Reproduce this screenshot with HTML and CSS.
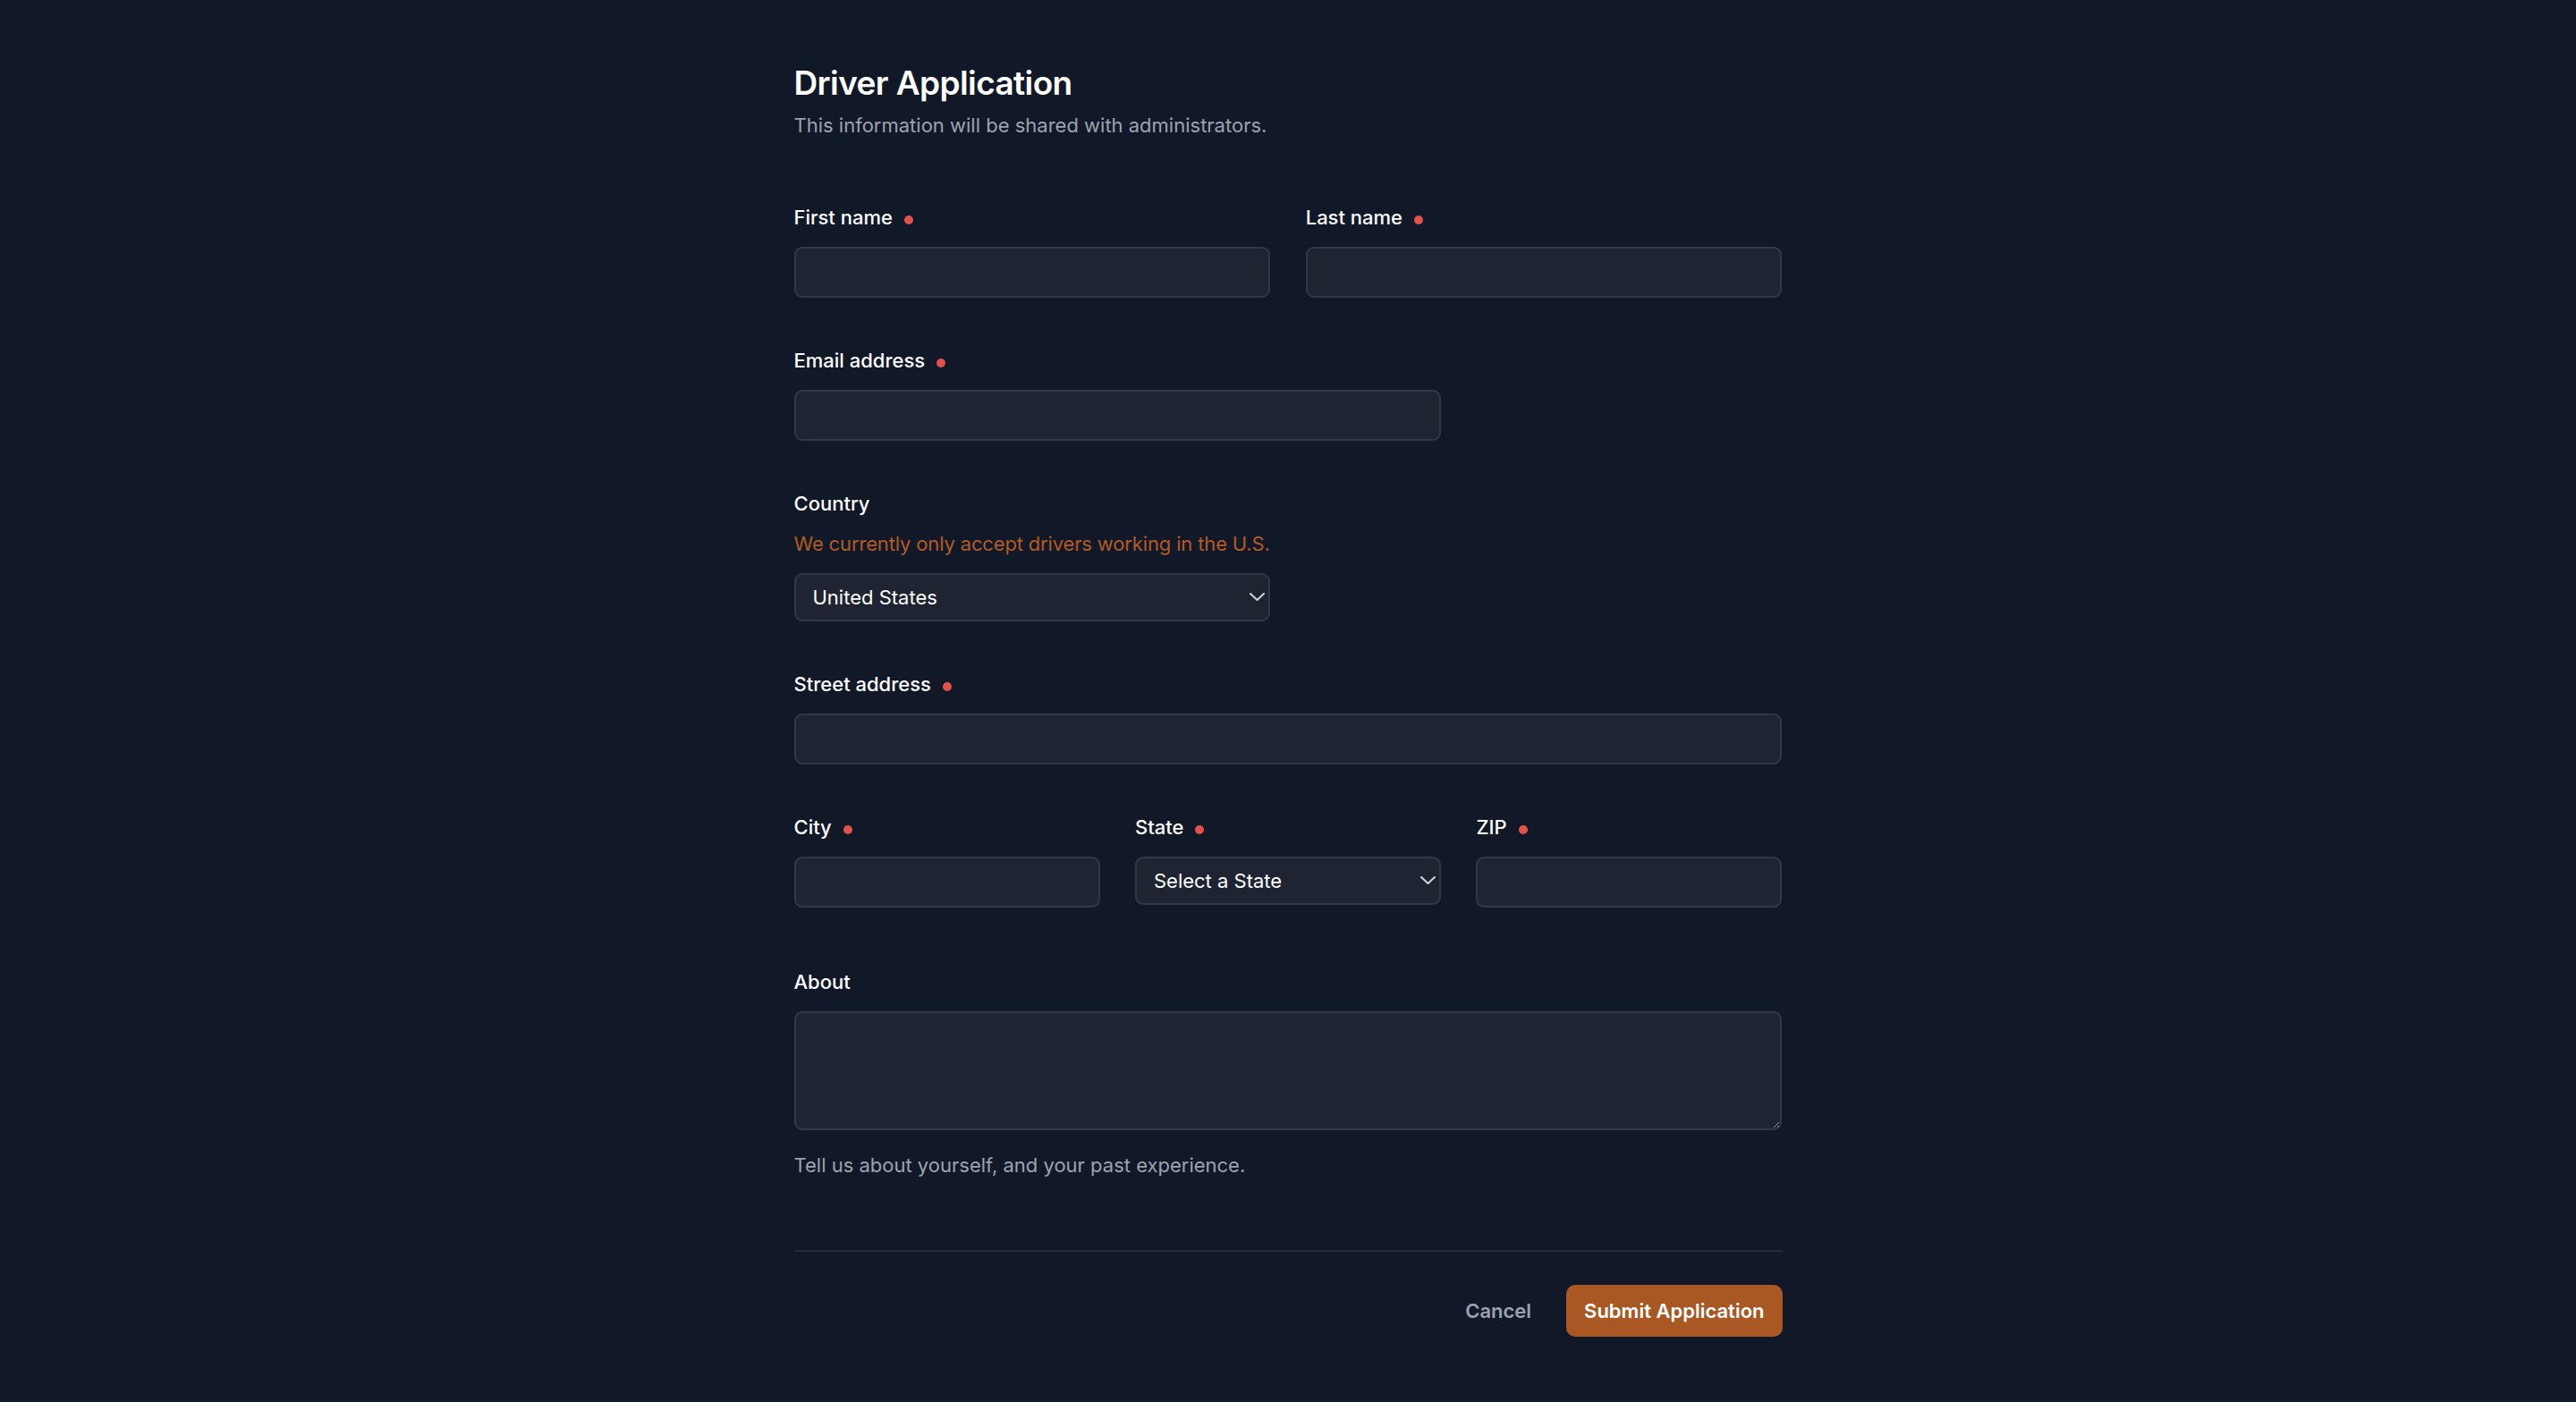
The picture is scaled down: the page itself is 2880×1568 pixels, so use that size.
FILE: index.html
```html
<!DOCTYPE html>
<html lang="en">
<head>
<meta charset="utf-8">
<title>Driver Application</title>
<link rel="stylesheet" href="styles.css">
</head>
<body>
<main class="page">
  <form class="form">
    <header class="intro">
      <h1 class="title">Driver Application</h1>
      <p class="subtitle">This information will be shared with administrators.</p>
    </header>

    <div class="fields">
      <div class="field span-3">
        <label class="label" for="first-name">First name<span class="req"></span></label>
        <input class="control" id="first-name" type="text">
      </div>
      <div class="field span-3">
        <label class="label" for="last-name">Last name<span class="req"></span></label>
        <input class="control" id="last-name" type="text">
      </div>

      <div class="field span-4">
        <label class="label" for="email">Email address<span class="req"></span></label>
        <input class="control" id="email" type="email">
      </div>

      <div class="field span-3">
        <label class="label" for="country">Country</label>
        <p class="warn">We currently only accept drivers working in the U.S.</p>
        <div class="select-wrap">
          <select class="select" id="country">
            <option>United States</option>
          </select>
          <svg class="chevron" width="17" height="9" viewBox="0 0 17 9" aria-hidden="true"><polyline points="1,1 8.5,8 16,1" fill="none" stroke="#d1d5db" stroke-width="2" stroke-linecap="round" stroke-linejoin="round"/></svg>
        </div>
      </div>

      <div class="field span-6">
        <label class="label" for="street">Street address<span class="req"></span></label>
        <input class="control" id="street" type="text">
      </div>

      <div class="field span-2">
        <label class="label" for="city">City<span class="req"></span></label>
        <input class="control" id="city" type="text">
      </div>
      <div class="field span-2">
        <label class="label" for="state">State<span class="req"></span></label>
        <div class="select-wrap">
          <select class="select" id="state">
            <option>Select a State</option>
          </select>
          <svg class="chevron" width="17" height="9" viewBox="0 0 17 9" aria-hidden="true"><polyline points="1,1 8.5,8 16,1" fill="none" stroke="#d1d5db" stroke-width="2" stroke-linecap="round" stroke-linejoin="round"/></svg>
        </div>
      </div>
      <div class="field span-2">
        <label class="label" for="zip">ZIP<span class="req"></span></label>
        <input class="control" id="zip" type="text">
      </div>

      <div class="field span-6 about">
        <label class="label" for="about">About</label>
        <textarea class="control textarea" id="about"></textarea>
        <p class="hint">Tell us about yourself, and your past experience.</p>
      </div>
    </div>

    <div class="actions">
      <button type="button" class="cancel">Cancel</button>
      <button type="submit" class="submit">Submit Application</button>
    </div>
  </form>
</main>
</body>
</html>
```

FILE: styles.css
```css
html {
  color-scheme: dark;
}

body {
  margin: 0;
  background: #111827;
  font-family: Inter, "Noto Sans", "Liberation Sans", sans-serif;
  color: #ffffff;
}

.page {
  display: flex;
  justify-content: center;
  padding-top: 68px;
}

.form {
  width: 1105px;
}

.title {
  margin: 0;
  font-size: 37px;
  line-height: 50px;
  font-weight: 600;
  letter-spacing: -0.6px;
  color: #ffffff;
}

.subtitle {
  margin: 3px 0 0;
  font-size: 22px;
  line-height: 38px;
  color: #9ca3af;
}

.fields {
  margin-top: 65px;
  display: grid;
  grid-template-columns: repeat(6, minmax(0, 1fr));
  column-gap: 39.4px;
  row-gap: 51px;
  padding-bottom: 76px;
  border-bottom: 2px solid #252b38;
}

.field {
  display: flex;
  flex-direction: column;
}

.span-2 { grid-column: span 2; }
.span-3 { grid-column: span 3; }
.span-4 { grid-column: span 4; }
.span-6 { grid-column: span 6; }

.about {
  margin-top: 13px;
}

.label {
  display: block;
  font-size: 22px;
  line-height: 38px;
  font-weight: 500;
  color: #ffffff;
}

.req {
  display: inline-block;
  width: 10px;
  height: 10px;
  margin-left: 13px;
  border-radius: 50%;
  background: #e0524b;
}

.control {
  display: block;
  box-sizing: border-box;
  width: 100%;
  height: 57px;
  margin: 14px 0 0;
  padding: 0 19px;
  background: #1e2431;
  border: 2px solid #323845;
  border-radius: 9px;
  color: #ffffff;
  font-family: inherit;
  font-size: 22px;
  outline: none;
}

.textarea {
  height: 133px;
  padding: 10px 19px;
  resize: vertical;
}

.warn {
  margin: 7px 0 0;
  font-size: 22px;
  line-height: 38px;
  letter-spacing: -0.15px;
  white-space: nowrap;
  color: #b35b25;
}

.hint {
  margin: 20px 0 0;
  font-size: 22px;
  line-height: 38px;
  color: #9ca3af;
}

.select-wrap {
  position: relative;
  margin-top: 14px;
}

.select {
  display: block;
  box-sizing: border-box;
  width: 100%;
  height: 54px;
  margin: 0;
  padding: 0 40px 0 19px;
  appearance: none;
  -webkit-appearance: none;
  background: #1e2431;
  border: 2px solid #323845;
  border-radius: 9px;
  color: #ffffff;
  font-family: inherit;
  font-size: 22px;
  outline: none;
}

.chevron {
  position: absolute;
  right: 6px;
  top: 50%;
  margin-top: -5px;
  pointer-events: none;
}

.actions {
  margin-top: 37px;
  display: flex;
  justify-content: flex-end;
  align-items: center;
  gap: 39px;
}

.cancel {
  padding: 0;
  background: none;
  border: none;
  font-family: inherit;
  font-size: 22px;
  line-height: 38px;
  font-weight: 600;
  color: #9ca3af;
}

.submit {
  height: 58px;
  padding: 0 20px;
  background: #a95823;
  border: none;
  border-radius: 10px;
  font-family: inherit;
  font-size: 22px;
  line-height: 38px;
  font-weight: 600;
  color: #ffffff;
}
```
